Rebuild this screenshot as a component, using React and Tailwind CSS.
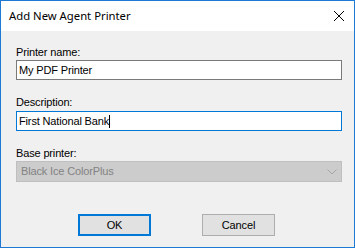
export default function App() {
  const font = { fontFamily: '"Liberation Sans", Arial, sans-serif' };
  return (
    <div className="w-[355px] h-[248px] border border-[#1c7ad4] flex flex-col bg-[#f0f0f0]" style={font}>
      <div className="h-[30px] bg-white flex items-center justify-between shrink-0">
        <span className="pl-[8px] text-[11.3px] text-black leading-none" style={{ fontFamily: '"Noto Sans", "Open Sans", sans-serif' }}>
          Add New Agent Printer
        </span>
        <svg width="12" height="12" viewBox="0 0 12 12" className="mr-[9px]">
          <path d="M1 1 L11 11 M11 1 L1 11" stroke="#000" strokeWidth="1" fill="none" />
        </svg>
      </div>
      <div className="flex flex-col pl-[15px] pt-[15px] text-[11px] leading-[13px] text-black tracking-[-0.15px]">
        <label>Printer name:</label>
        <div className="mt-[1px] w-[326px] h-[20px] bg-white border border-[#7a7a7a] flex items-center pl-[2px]">
          My PDF Printer
        </div>
        <label className="mt-[16px]">Description:</label>
        <div className="mt-[2px] w-[326px] h-[20px] bg-white border border-[#0078d7] flex items-center pl-[2px]">
          <span>First National Bank</span>
          <span className="w-[1px] h-[13px] bg-black" />
        </div>
        <label className="mt-[16px]">Base printer:</label>
        <div className="mt-[1px] w-[326px] h-[21px] bg-[#cccccc] border border-[#bfbfbf] flex items-center justify-between pl-[4px] pr-[4px] text-[#838383]">
          <span>Black Ice ColorPlus</span>
          <svg width="10" height="6" viewBox="0 0 10 6">
            <path d="M0.5 0.5 L5 5 L9.5 0.5" stroke="#a6a6a6" strokeWidth="1" fill="none" />
          </svg>
        </div>
        <div className="mt-[32px] flex justify-start gap-[51px] pl-[62px]">
          <button className="w-[73px] h-[22px] bg-[#e1e1e1] border-2 border-[#0078d7] text-[11px] text-black">OK</button>
          <button className="w-[73px] h-[22px] bg-[#e1e1e1] border border-[#adadad] text-[11px] text-black">Cancel</button>
        </div>
      </div>
    </div>
  );
}
